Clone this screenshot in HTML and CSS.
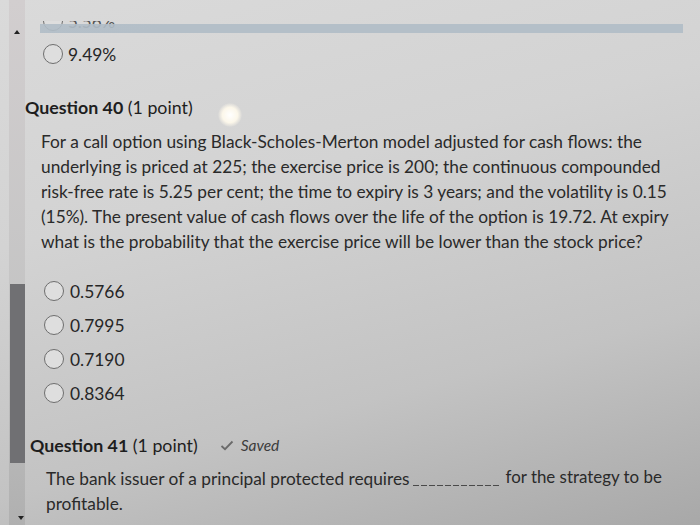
FILE: index.html
```html
<!DOCTYPE html>
<html>
<head>
<meta charset="utf-8">
<link rel="stylesheet" href="styles.css">
</head>
<body>
<div class="page">
  <div class="scroll">
    <div class="arrow-up"></div>
    <div class="thumb"></div>
    <div class="arrow-down"></div>
  </div>
  <div class="content">
    <div class="prev-clip">
      <div class="option prev"><span class="radio"></span><span>5.56%</span></div>
    </div>
    <div class="bar"></div>
    <div class="option first"><span class="radio"></span><span>9.49%</span></div>

    <h2 class="qhead q40"><b>Question 40</b> (1 point)</h2>
    <p class="qtext">For a call option using Black-Scholes-Merton model adjusted for cash flows: the<br>underlying is priced at 225; the exercise price is 200; the continuous compounded<br>risk-free rate is 5.25 per cent; the time to expiry is 3 years; and the volatility is 0.15<br>(15%). The present value of cash flows over the life of the option is 19.72. At expiry<br>what is the probability that the exercise price will be lower than the stock price?</p>
    <div class="options">
      <div class="option"><span class="radio"></span><span>0.5766</span></div>
      <div class="option"><span class="radio"></span><span>0.7995</span></div>
      <div class="option"><span class="radio"></span><span>0.7190</span></div>
      <div class="option"><span class="radio"></span><span>0.8364</span></div>
    </div>

    <h2 class="qhead q41"><b>Question 41</b> (1 point)<span class="saved"><svg width="14" height="11" viewBox="0 0 14 11"><path d="M1.5 6 L5 9.2 L12.5 1.5" fill="none" stroke="#6a6a6a" stroke-width="1.8"/></svg><i>Saved</i></span></h2>
    <p class="qtext q41text">The bank issuer of a principal protected requires<span class="blank"></span><span class="after">for the strategy to be</span><br>profitable.</p>
  </div>
  <div class="glare"></div>
</div>
</body>
</html>
```
FILE: styles.css
```css
html, body {
  margin: 0;
  padding: 0;
}
body {
  width: 700px;
  height: 525px;
  overflow: hidden;
  font-family: Lato, "Open Sans", sans-serif;
  color: #262626;
  background: linear-gradient(165deg, #dadada 0%, #d3d3d3 35%, #c3c3c3 70%, #a8a8a8 100%);
}
.page {
  position: relative;
  display: flex;
  height: 525px;
}
.scroll {
  width: 16px;
  margin-left: 9px;
  display: flex;
  flex-direction: column;
  align-items: center;
  background: linear-gradient(to bottom, #d2cecf, #c4c4c4 60%, #b0b0b0);
}
.arrow-up {
  margin-top: 30px;
  width: 0;
  height: 0;
  border-left: 3px solid transparent;
  border-right: 3px solid transparent;
  border-bottom: 4px solid #222;
}
.thumb {
  margin-top: 250px;
  width: 15px;
  height: 179px;
  background: #707073;
}
.arrow-down {
  margin-top: auto;
  margin-bottom: 5px;
  margin-left: 8px;
  width: 0;
  height: 0;
  border-left: 3px solid transparent;
  border-right: 3px solid transparent;
  border-top: 4px solid #222;
}
.content {
  flex: 1;
  display: flex;
  flex-direction: column;
}
.option {
  display: flex;
  align-items: center;
  height: 34px;
  font-size: 17.4px;
  gap: 5px;
  margin-left: 18px;
}
.radio {
  width: 18px;
  height: 18px;
  border: 1.5px solid #6e6e6e;
  border-radius: 50%;
  background: #dedede;
  flex: none;
}
.prev-clip {
  margin-top: 21px;
  height: 10px;
  overflow: hidden;
  display: flex;
  flex-direction: column;
  justify-content: flex-end;
}
.prev-clip .option {
  height: 21px;
  flex: none;
  align-items: flex-end;
  font-size: 17px;
  color: #555;
  line-height: 19px;
}
.bar {
  margin: -7px 17px 0 15px;
  height: 9px;
  background: rgba(176, 188, 198, 0.9);
}
.option.first {
  margin-top: 7px;
  height: 28px;
  font-size: 17.4px;
  gap: 5px;
}
.qhead {
  margin: 0;
  font-weight: normal;
  font-size: 17.8px;
  line-height: 24px;
  color: #1e1e1e;
}
.qhead b {
  font-weight: bold;
}
.q40 {
  margin-top: 27px;
  margin-left: 0;
}
.qtext {
  margin: 10px 0 0 16px;
  font-size: 17.3px;
  line-height: 25px;
  color: #2a2a2a;
  white-space: nowrap;
}
.options {
  margin-top: 20px;
}
.options .option {
  margin-left: 19px;
  gap: 6px;
}
.q41 {
  margin-top: 23px;
  margin-left: 5px;
  display: flex;
  align-items: center;
  white-space: pre;
}
.saved {
  display: inline-flex;
  align-items: center;
  gap: 7px;
  margin-left: 22px;
  font-size: 15.5px;
  color: #3c3c3c;
}
.q41text {
  margin: 9px 0 0 21px;
}
.blank {
  display: inline-block;
  width: 87px;
  height: 1px;
  vertical-align: -1px;
  margin: 0 6px 0 3px;
  background: repeating-linear-gradient(to right, #4a4a4a 0 6px, transparent 6px 8px);
}
.after {
  position: relative;
  top: -2px;
  font-size: 16.9px;
}
.glare {
  position: absolute;
  left: 218px;
  top: 103px;
  width: 24px;
  height: 24px;
  border-radius: 50%;
  background: radial-gradient(circle, #ffffff 0%, #fcf7ea 45%, rgba(255,255,255,0) 72%);
}
```
